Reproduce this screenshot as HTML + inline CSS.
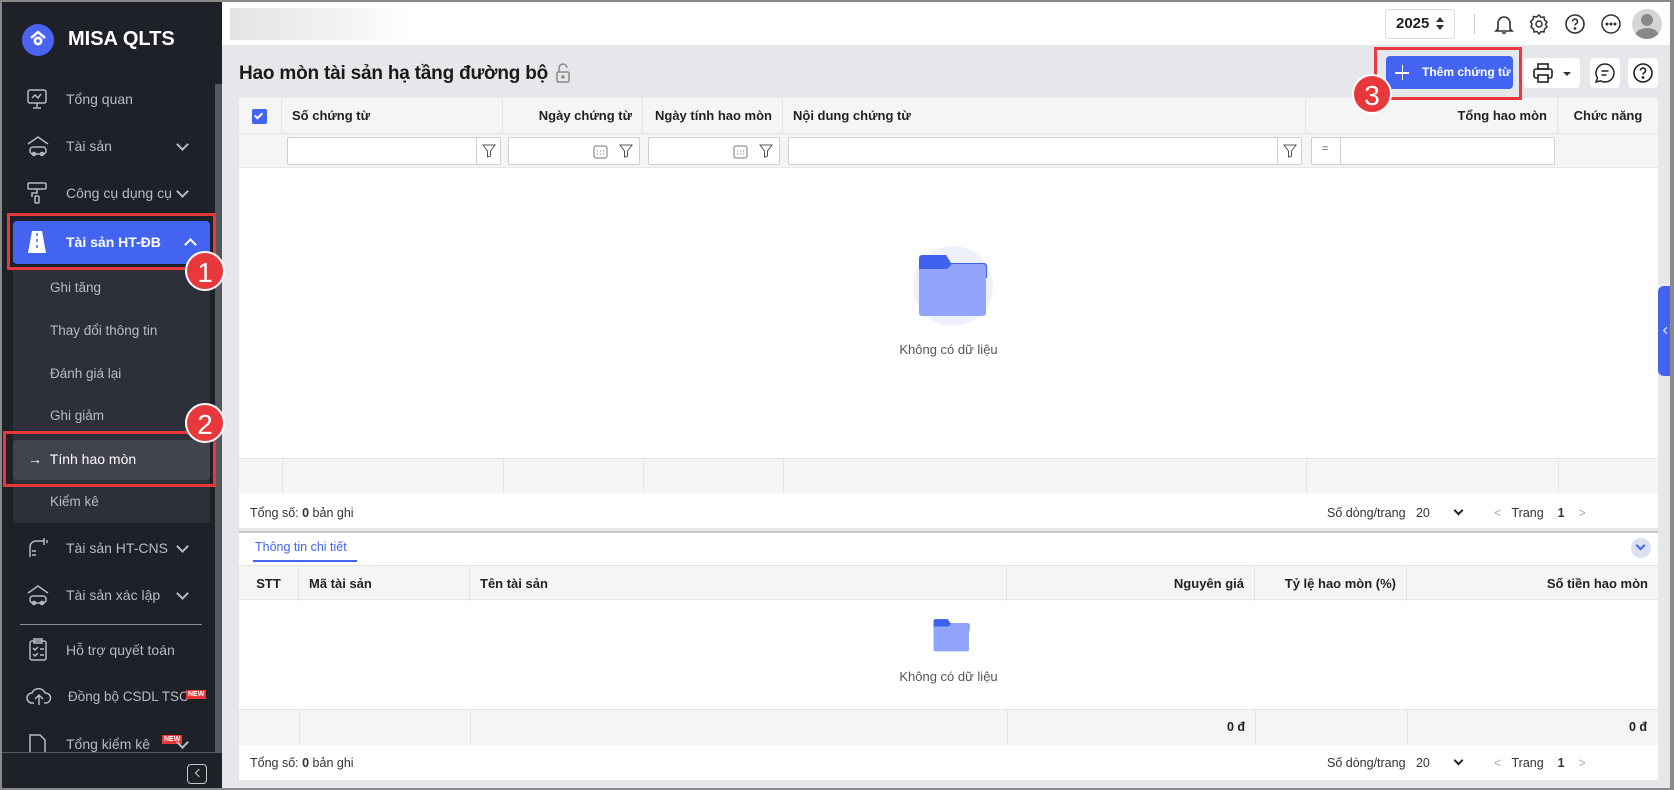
<!DOCTYPE html>
<html><head><meta charset="utf-8"><style>
*{box-sizing:border-box;margin:0;padding:0}
body{width:1674px;height:790px;overflow:hidden;font-family:"Liberation Sans",Arial,sans-serif;background:#8a8a8a;position:relative;font-size:13px;color:#212121}
.a{position:absolute}
#frame{left:2px;top:2px;width:1668px;height:786px;background:#e6e7eb;overflow:hidden}
#side{left:0;top:0;width:220px;height:786px;background:#1f2129}
.mi{position:absolute;left:0;width:200px;height:30px;color:#b9bbc3;font-size:14px;line-height:30px}
.mi .t{position:absolute;left:64px}
.mi .ch{position:absolute;left:176px;top:9px;width:9px;height:9px;border-right:2px solid #b9bbc3;border-bottom:2px solid #b9bbc3;transform:rotate(45deg)}
.sub{position:absolute;left:48px;color:#b9bbc3;font-size:13.5px}
.red{position:absolute;border:3px solid #e8383b}
.circ{position:absolute;width:40px;height:40px;border-radius:50%;background:#e8383b;color:#fff;font-size:28px;text-align:center;line-height:40px;border:2px solid #fff}
.th{position:absolute;top:0;height:35px;line-height:35px;font-weight:bold;font-size:13px;color:#222;border-right:1px solid #e3e3e3;padding:0 10px;white-space:nowrap}
.inp{position:absolute;top:4px;height:28px;background:#fff;border:1px solid #d0d0d0;border-radius:2px}
.icb{position:absolute;background:#fff;border-radius:4px}
</style></head><body>
<div id="frame" class="a">
<div id="side" class="a">
  <div class="a" style="left:20px;top:22px;width:32px;height:32px;border-radius:50%;background:#4a63f0"></div>
  <svg class="a" style="left:26px;top:27px" width="20" height="20" viewBox="0 0 20 20"><path d="M3 9 L10 3 L17 9" stroke="#fff" stroke-width="2.5" fill="none"/><circle cx="10" cy="12" r="4.5" fill="#fff"/><circle cx="10" cy="12" r="1.8" fill="#4a63f0"/></svg>
  <div class="a" style="left:66px;top:26px;color:#fff;font-weight:bold;font-size:20px">MISA QLTS</div>
  <div class="a" style="left:213px;top:82px;width:7px;height:680px;background:#55575e"></div>
  <div class="mi" style="top:82px"><svg class="a" style="left:24px;top:4px" width="22" height="22" viewBox="0 0 22 22" fill="none" stroke="#b9bbc3" stroke-width="1.5"><rect x="2" y="2" width="18" height="13" rx="2"/><path d="M11 15v4M7 20h8M6 10l3-3 3 3 3-4"/></svg><span class="t">Tổng quan</span></div>
  <div class="mi" style="top:129px"><svg class="a" style="left:24px;top:3px" width="24" height="24" viewBox="0 0 24 24" fill="none" stroke="#b9bbc3" stroke-width="1.5"><path d="M2 10 L12 3 L22 10"/><rect x="4" y="13" width="16" height="7" rx="3"/><circle cx="8" cy="20" r="1.5"/><circle cx="16" cy="20" r="1.5"/></svg><span class="t">Tài sản</span><span class="ch"></span></div>
  <div class="mi" style="top:176px"><svg class="a" style="left:24px;top:3px" width="22" height="24" viewBox="0 0 22 24" fill="none" stroke="#b9bbc3" stroke-width="1.5"><rect x="2" y="2" width="18" height="6" rx="1"/><path d="M11 8v4H6v4"/><rect x="9" y="15" width="4" height="7" rx="1"/></svg><span class="t">Công cụ dụng cụ</span><span class="ch"></span></div>
  <div class="a" style="left:11px;top:219px;width:197px;height:43px;background:#4264f0;border-radius:4px"></div>
  <svg class="a" style="left:25px;top:228px" width="20" height="24" viewBox="0 0 20 24"><path d="M5 1h10l4 22H1z" fill="#fff"/><path d="M10 3v3M10 9v3M10 15v3" stroke="#4264f0" stroke-width="1.5"/></svg>
  <div class="a" style="left:64px;top:232px;color:#fff;font-weight:bold;font-size:14px">Tài sản HT-ĐB</div>
  <div class="a" style="left:184px;top:238px;width:9px;height:9px;border-left:2px solid #fff;border-top:2px solid #fff;transform:rotate(45deg)"></div>
  <div class="a" style="left:11px;top:265px;width:197px;height:256px;background:#2d2f3b;border-radius:0 0 4px 4px"></div>
  <div class="sub" style="top:278px">Ghi tăng</div>
  <div class="sub" style="top:321px">Thay đổi thông tin</div>
  <div class="sub" style="top:364px">Đánh giá lại</div>
  <div class="sub" style="top:406px">Ghi giảm</div>
  <div class="a" style="left:11px;top:438px;width:197px;height:40px;background:#41434f;border-radius:3px"></div>
  <div class="a" style="left:26px;top:449px;color:#fff;font-size:14px">→ &nbsp;Tính hao mòn</div>
  <div class="sub" style="top:492px">Kiểm kê</div>
  <div class="mi" style="top:531px"><svg class="a" style="left:24px;top:4px" width="24" height="22" viewBox="0 0 24 22" fill="none" stroke="#b9bbc3" stroke-width="1.5"><path d="M4 20V10a6 6 0 0 1 6-6h8M18 1v7M21 3v3M6 14h4M6 18h4"/></svg><span class="t">Tài sản HT-CNS</span><span class="ch"></span></div>
  <div class="mi" style="top:578px"><svg class="a" style="left:24px;top:3px" width="24" height="24" viewBox="0 0 24 24" fill="none" stroke="#b9bbc3" stroke-width="1.5"><path d="M2 10 L12 3 L22 10"/><rect x="4" y="13" width="16" height="7" rx="3"/><circle cx="8" cy="20" r="1.5"/><circle cx="16" cy="20" r="1.5"/></svg><span class="t">Tài sản xác lập</span><span class="ch"></span></div>
  <div class="a" style="left:18px;top:622px;width:182px;height:1px;background:#8a8c93"></div>
  <div class="mi" style="top:633px"><svg class="a" style="left:26px;top:3px" width="20" height="24" viewBox="0 0 20 24" fill="none" stroke="#b9bbc3" stroke-width="1.5"><rect x="2" y="3" width="16" height="19" rx="2"/><rect x="6" y="1" width="8" height="4"/><path d="M5 10l2 2 3-3M12 11h4M5 16l2 2 3-3M12 17h4"/></svg><span class="t">Hỗ trợ quyết toán</span></div>
  <div class="mi" style="top:680px"><svg class="a" style="left:24px;top:3px" width="26" height="22" viewBox="0 0 26 22" fill="none" stroke="#b9bbc3" stroke-width="1.5"><path d="M8 18H6a5 5 0 0 1 0-10 7 7 0 0 1 13 0 5 5 0 0 1 1 10h-2M13 20v-9M9 14l4-4 4 4"/></svg><span class="t" style="left:66px;font-size:13.5px">Đồng bộ CSDL TSC</span><span class="a" style="left:184px;top:8px;background:#e8383b;color:#fff;font-size:7px;line-height:9px;padding:0 2px;font-weight:bold">NEW</span></div>
  <div class="mi" style="top:727px"><svg class="a" style="left:26px;top:4px" width="20" height="22" viewBox="0 0 20 22" fill="none" stroke="#b9bbc3" stroke-width="1.5"><path d="M2 2h10l5 5v13H2z"/></svg><span class="t">Tổng kiểm kê</span><span class="a" style="left:160px;top:6px;background:#e8383b;color:#fff;font-size:7px;line-height:9px;padding:0 2px;font-weight:bold">NEW</span><span class="ch"></span></div>
  <div class="a" style="left:0;top:750px;width:220px;height:36px;background:#1f2129;border-top:1px solid #55575e"></div>
  <div class="a" style="left:185px;top:762px;width:20px;height:20px;border:1.5px solid #c8c8c8;border-radius:4px"></div>
  <div class="a" style="left:194px;top:768px;width:6px;height:6px;border-left:1.5px solid #c8c8c8;border-bottom:1.5px solid #c8c8c8;transform:rotate(45deg)"></div>
</div>
<!-- topbar -->
<div class="a" style="left:220px;top:0;width:1448px;height:43px;background:#fff"></div>
<div class="a" style="left:228px;top:6px;width:180px;height:32px;background:linear-gradient(90deg,#e4e4e4,#f2f2f2 60%,#fff)"></div>
<div class="a" style="left:1383px;top:7px;width:70px;height:30px;border:1px solid #d8d8d8;border-radius:4px;font-weight:bold;font-size:15px;line-height:28px;padding-left:10px">2025</div>
<div class="a" style="left:1434px;top:15px;width:0;height:0;border:4px solid transparent;border-bottom:5px solid #333;border-top:0"></div>
<div class="a" style="left:1434px;top:23px;width:0;height:0;border:4px solid transparent;border-top:5px solid #333;border-bottom:0"></div>
<div class="a" style="left:1472px;top:12px;width:1px;height:20px;background:#ccc"></div>
<svg class="a" style="left:1490px;top:10px" width="24" height="24" viewBox="0 0 24 24" fill="none" stroke="#333" stroke-width="1.6"><path d="M6 17V11a6 6 0 0 1 12 0v6l2 2H4zM10 21h4"/></svg>
<svg class="a" style="left:1526px;top:11px" width="22" height="22" viewBox="0 0 22 22" fill="none" stroke="#333" stroke-width="1.5"><circle cx="11" cy="11" r="3"/><path d="M11 2l2 2.5 3-.5.5 3 2.5 2-1.5 2.5 1.5 2.5-2.5 2-.5 3-3-.5-2 2.5-2-2.5-3 .5-.5-3-2.5-2L4 11 2.5 8.5 5 6.5l.5-3 3 .5z"/></svg>
<svg class="a" style="left:1562px;top:11px" width="22" height="22" viewBox="0 0 22 22" fill="none" stroke="#333" stroke-width="1.6"><circle cx="11" cy="11" r="9"/><path d="M8.5 8.5a2.5 2.5 0 1 1 3.5 2.3c-.7.4-1 .9-1 1.7"/><circle cx="11" cy="15.5" r=".6" fill="#333"/></svg>
<svg class="a" style="left:1598px;top:11px" width="22" height="22" viewBox="0 0 22 22" fill="none" stroke="#333" stroke-width="1.5"><circle cx="11" cy="11" r="9"/><circle cx="7" cy="11" r=".8" fill="#333"/><circle cx="11" cy="11" r=".8" fill="#333"/><circle cx="15" cy="11" r=".8" fill="#333"/></svg>
<div class="a" style="left:1630px;top:7px;width:30px;height:30px;border-radius:50%;background:#d5d5d5;overflow:hidden"><div class="a" style="left:9px;top:5px;width:12px;height:12px;border-radius:50%;background:#888"></div><div class="a" style="left:3px;top:19px;width:24px;height:16px;border-radius:50%;background:#888"></div></div>
<!-- title -->
<div class="a" style="left:237px;top:61px;font-size:19px;font-weight:bold;color:#1a1a1a;letter-spacing:-0.2px;white-space:nowrap">Hao mòn tài sản hạ tầng đường bộ</div>
<svg class="a" style="left:553px;top:61px" width="16" height="20" viewBox="0 0 16 20" fill="none" stroke="#888" stroke-width="1.5"><path d="M4 9V5a4 4 0 0 1 8 0"/><rect x="2" y="9" width="12" height="10" rx="1.5"/><circle cx="8" cy="14" r="1"/></svg>
<div class="a" style="left:1384px;top:54px;width:127px;height:33px;background:#4264f0;border-radius:4px;color:#fff;font-weight:bold;font-size:12px;line-height:33px;padding-left:36px;white-space:nowrap">Thêm chứng từ</div>
<div class="a" style="left:1393px;top:70px;width:14px;height:1.5px;background:#fff"></div><div class="a" style="left:1399.5px;top:63px;width:1.5px;height:15px;background:#fff"></div>
<div class="icb" style="left:1522px;top:56px;width:56px;height:30px"></div>
<svg class="a" style="left:1530px;top:60px" width="22" height="22" viewBox="0 0 22 22" fill="none" stroke="#222" stroke-width="1.6"><rect x="6" y="2" width="10" height="5"/><rect x="2" y="7" width="18" height="9" rx="2"/><rect x="6" y="13" width="10" height="7" fill="#fff"/></svg>
<div class="a" style="left:1561px;top:70px;border:4px solid transparent;border-top:4px solid #333"></div>
<div class="icb" style="left:1588px;top:56px;width:30px;height:30px"></div>
<svg class="a" style="left:1592px;top:60px" width="22" height="22" viewBox="0 0 22 22" fill="none" stroke="#222" stroke-width="1.5"><path d="M11 2a9 9 0 1 1-4.5 16.8L2 20l1.5-4A9 9 0 0 1 11 2zM7.5 9h7M7.5 13h5"/></svg>
<div class="icb" style="left:1626px;top:56px;width:30px;height:30px"></div>
<svg class="a" style="left:1630px;top:60px" width="22" height="22" viewBox="0 0 22 22" fill="none" stroke="#222" stroke-width="1.6"><circle cx="11" cy="11" r="9"/><path d="M8.5 8.5a2.5 2.5 0 1 1 3.5 2.3c-.7.4-1 .9-1 1.7"/><circle cx="11" cy="15.5" r=".6" fill="#222"/></svg>
<!-- table -->
<div class="a" style="left:237px;top:96px;width:1419px;height:430px;background:#fff">
  <div class="a" style="left:0;top:0;width:1419px;height:70px;background:#f5f5f5;border-bottom:1px solid #e6e6e6"></div>
  <div class="a" style="left:0;top:35px;width:1419px;height:1px;background:#e3e3e3"></div>
  <div class="a" style="left:13px;top:11px;width:15px;height:15px;background:#4264f0;border-radius:2px"></div>
  <div class="a" style="left:17px;top:13px;width:5px;height:8px;border-right:2px solid #fff;border-bottom:2px solid #fff;transform:rotate(45deg)"></div>
  <div class="th" style="left:0;width:43px"></div>
  <div class="th" style="left:43px;width:221px">Số chứng từ</div>
  <div class="th" style="left:264px;width:140px;text-align:right">Ngày chứng từ</div>
  <div class="th" style="left:404px;width:140px;text-align:right">Ngày tính hao mòn</div>
  <div class="th" style="left:544px;width:523px">Nội dung chứng từ</div>
  <div class="th" style="left:1067px;width:252px;text-align:right">Tổng hao mòn</div>
  <div class="th" style="left:1319px;width:100px;text-align:center;border:0">Chức năng</div>
  <div class="a" style="top:35px;left:0;width:1419px;height:35px">
    <div class="inp" style="left:48px;width:214px"><div class="a" style="left:188px;top:0;width:1px;height:26px;background:#d0d0d0"></div><svg class="a" style="left:194px;top:6px" width="14" height="14" viewBox="0 0 14 14" fill="none" stroke="#555"><path d="M1 1h12L8.5 7v5L5.5 13V7z"/></svg></div>
    <div class="inp" style="left:269px;width:132px"><svg class="a" style="left:84px;top:6px" width="15" height="15" viewBox="0 0 15 15" fill="none" stroke="#777"><rect x="1" y="2" width="13" height="12" rx="2"/><path d="M4 7h1M7 7h1M10 7h1M4 10h1M7 10h1M10 10h1"/></svg><svg class="a" style="left:110px;top:6px" width="14" height="14" viewBox="0 0 14 14" fill="none" stroke="#555"><path d="M1 1h12L8.5 7v5L5.5 13V7z"/></svg></div>
    <div class="inp" style="left:409px;width:132px"><svg class="a" style="left:84px;top:6px" width="15" height="15" viewBox="0 0 15 15" fill="none" stroke="#777"><rect x="1" y="2" width="13" height="12" rx="2"/><path d="M4 7h1M7 7h1M10 7h1M4 10h1M7 10h1M10 10h1"/></svg><svg class="a" style="left:110px;top:6px" width="14" height="14" viewBox="0 0 14 14" fill="none" stroke="#555"><path d="M1 1h12L8.5 7v5L5.5 13V7z"/></svg></div>
    <div class="inp" style="left:549px;width:514px"><div class="a" style="left:488px;top:0;width:1px;height:26px;background:#d0d0d0"></div><svg class="a" style="left:494px;top:6px" width="14" height="14" viewBox="0 0 14 14" fill="none" stroke="#555"><path d="M1 1h12L8.5 7v5L5.5 13V7z"/></svg></div>
    <div class="inp" style="left:1072px;width:244px"><div class="a" style="left:28px;top:0;width:1px;height:26px;background:#d0d0d0"></div><span class="a" style="left:10px;top:5px;font-size:11px;color:#555">=</span></div>
  </div>
  <div class="a" style="left:674px;top:148px;width:80px;height:80px;border-radius:50%;background:#eef1fd"></div>
  <svg class="a" style="left:677px;top:157px" width="72" height="62" viewBox="0 0 72 62"><path d="M3 3a3 3 0 0 1 3-3h24l5 8h33a3 3 0 0 1 3 3v12H3z" fill="#4061ee"/><path d="M3 14h28l5-5h31a3 3 0 0 1 3 3v46a3 3 0 0 1-3 3H6a3 3 0 0 1-3-3z" fill="#90a5fb"/></svg>
  <div class="a" style="left:0;top:244px;width:1419px;text-align:center;color:#555;font-size:13px">Không có dữ liệu</div>
  <div class="a" style="left:0;top:360px;width:1419px;height:35px;background:#f5f5f5;border-top:1px solid #e6e6e6"></div>
  <div class="a" style="left:43px;top:360px;width:1px;height:35px;background:#e3e3e3"></div><div class="a" style="left:264px;top:360px;width:1px;height:35px;background:#e3e3e3"></div><div class="a" style="left:404px;top:360px;width:1px;height:35px;background:#e3e3e3"></div><div class="a" style="left:544px;top:360px;width:1px;height:35px;background:#e3e3e3"></div><div class="a" style="left:1067px;top:360px;width:1px;height:35px;background:#e3e3e3"></div><div class="a" style="left:1319px;top:360px;width:1px;height:35px;background:#e3e3e3"></div>
  <div class="a" style="left:11px;top:408px;font-size:12.5px;color:#333">Tổng số: <b>0</b> bản ghi</div>
  <div class="a" style="left:1088px;top:408px;font-size:12.5px;color:#333">Số dòng/trang &nbsp;&nbsp;20</div>
  <div class="a" style="left:1216px;top:409px;width:7px;height:7px;border-right:2px solid #222;border-bottom:2px solid #222;transform:rotate(45deg)"></div>
  <div class="a" style="left:1255px;top:408px;font-size:12.5px;color:#333"><span style="color:#aaa">&lt;</span>&nbsp;&nbsp; Trang &nbsp;&nbsp; <b>1</b> &nbsp;&nbsp; <span style="color:#aaa">&gt;</span></div>
</div>
<!-- detail -->
<div class="a" style="left:237px;top:529px;width:1419px;height:249px;background:#fff">
  <div class="a" style="left:0;top:0;width:1419px;height:2px;background:#c8c8c8"></div>
  <div class="a" style="left:16px;top:9px;color:#4264f0;font-size:12.5px">Thông tin chi tiết</div>
  <div class="a" style="left:14px;top:29px;width:104px;height:2px;background:#4264f0"></div>
  <div class="a" style="left:1392px;top:7px;width:20px;height:20px;border-radius:50%;background:#dde1ee"></div>
  <div class="a" style="left:1398px;top:11px;width:7px;height:7px;border-right:2px solid #4264f0;border-bottom:2px solid #4264f0;transform:rotate(45deg)"></div>
  <div class="a" style="left:0;top:34px;width:1419px;height:35px;background:#f5f5f5;border-top:1px solid #e6e6e6;border-bottom:1px solid #e6e6e6">
    <div class="th" style="left:0;width:60px;text-align:center">STT</div>
    <div class="th" style="left:60px;width:171px">Mã tài sản</div>
    <div class="th" style="left:231px;width:537px">Tên tài sản</div>
    <div class="th" style="left:768px;width:248px;text-align:right">Nguyên giá</div>
    <div class="th" style="left:1016px;width:152px;text-align:right">Tỷ lệ hao mòn (%)</div>
    <div class="th" style="left:1168px;width:251px;text-align:right;border:0">Số tiền hao mòn</div>
  </div>
  <svg class="a" style="left:693px;top:88px" width="38" height="33" viewBox="0 0 72 62"><path d="M3 3a3 3 0 0 1 3-3h24l5 8h33a3 3 0 0 1 3 3v12H3z" fill="#4061ee"/><path d="M3 14h28l5-5h31a3 3 0 0 1 3 3v46a3 3 0 0 1-3 3H6a3 3 0 0 1-3-3z" fill="#90a5fb"/></svg>
  <div class="a" style="left:0;top:138px;width:1419px;text-align:center;color:#555;font-size:13px">Không có dữ liệu</div>
  <div class="a" style="left:0;top:178px;width:1419px;height:36px;background:#f5f5f5;border-top:1px solid #e6e6e6"></div>
  <div class="a" style="left:60px;top:178px;width:1px;height:36px;background:#e3e3e3"></div><div class="a" style="left:231px;top:178px;width:1px;height:36px;background:#e3e3e3"></div><div class="a" style="left:768px;top:178px;width:1px;height:36px;background:#e3e3e3"></div><div class="a" style="left:1016px;top:178px;width:1px;height:36px;background:#e3e3e3"></div><div class="a" style="left:1168px;top:178px;width:1px;height:36px;background:#e3e3e3"></div>
  <div class="a" style="left:968px;top:189px;width:38px;text-align:right;font-weight:bold;font-size:12.5px">0 đ</div>
  <div class="a" style="left:1370px;top:189px;width:38px;text-align:right;font-weight:bold;font-size:12.5px">0 đ</div>
  <div class="a" style="left:11px;top:225px;font-size:12.5px;color:#333">Tổng số: <b>0</b> bản ghi</div>
  <div class="a" style="left:1088px;top:225px;font-size:12.5px;color:#333">Số dòng/trang &nbsp;&nbsp;20</div>
  <div class="a" style="left:1216px;top:226px;width:7px;height:7px;border-right:2px solid #222;border-bottom:2px solid #222;transform:rotate(45deg)"></div>
  <div class="a" style="left:1255px;top:225px;font-size:12.5px;color:#333"><span style="color:#aaa">&lt;</span>&nbsp;&nbsp; Trang &nbsp;&nbsp; <b>1</b> &nbsp;&nbsp; <span style="color:#aaa">&gt;</span></div>
</div>
<div class="a" style="left:1656px;top:284px;width:14px;height:90px;background:#4264f0;border-radius:6px 0 0 6px"></div>
<div class="a" style="left:1662px;top:326px;width:5px;height:5px;border-left:1.5px solid #fff;border-bottom:1.5px solid #fff;transform:rotate(45deg)"></div>
<!-- annotations -->
<div class="red" style="left:5px;top:211px;width:209px;height:57px"></div>
<div class="circ" style="left:183px;top:249px">1</div>
<div class="red" style="left:1px;top:429px;width:213px;height:56px"></div>
<div class="circ" style="left:183px;top:401px">2</div>
<div class="red" style="left:1372px;top:45px;width:148px;height:53px"></div>
<div class="circ" style="left:1350px;top:72px">3</div>
</div>
</body></html>
